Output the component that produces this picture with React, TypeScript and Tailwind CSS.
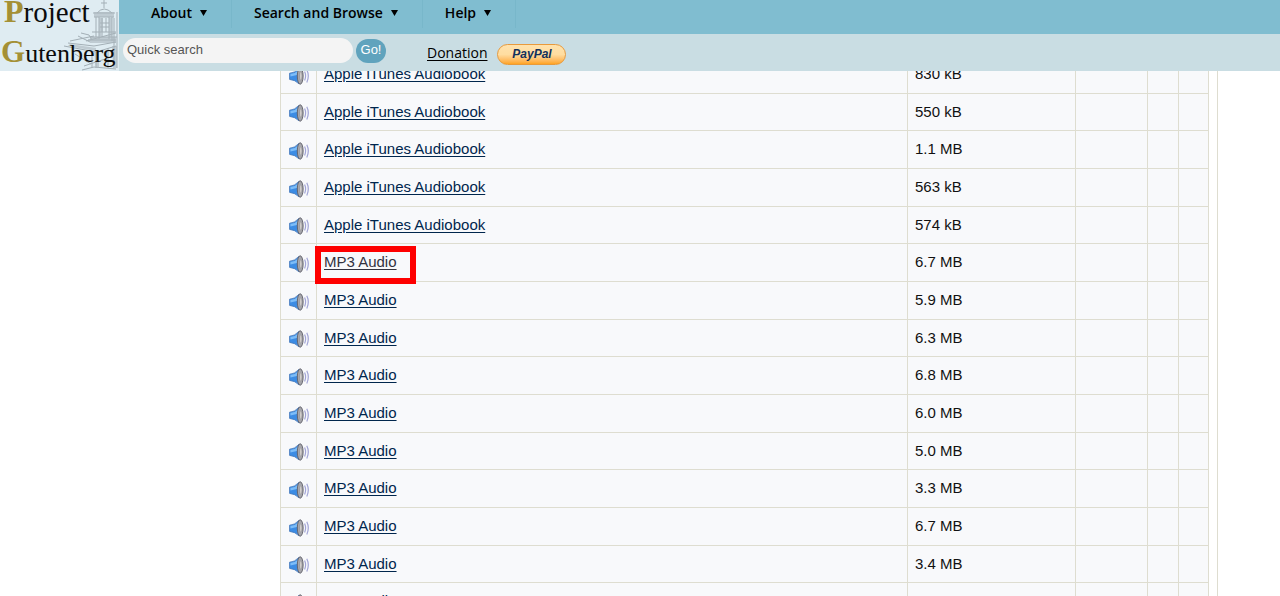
import React from 'react';

const files = [
  { format: 'Apple iTunes Audiobook', size: '830 kB' },
  { format: 'Apple iTunes Audiobook', size: '550 kB' },
  { format: 'Apple iTunes Audiobook', size: '1.1 MB' },
  { format: 'Apple iTunes Audiobook', size: '563 kB' },
  { format: 'Apple iTunes Audiobook', size: '574 kB' },
  { format: 'MP3 Audio', size: '6.7 MB', marked: true },
  { format: 'MP3 Audio', size: '5.9 MB' },
  { format: 'MP3 Audio', size: '6.3 MB' },
  { format: 'MP3 Audio', size: '6.8 MB' },
  { format: 'MP3 Audio', size: '6.0 MB' },
  { format: 'MP3 Audio', size: '5.0 MB' },
  { format: 'MP3 Audio', size: '3.3 MB' },
  { format: 'MP3 Audio', size: '6.7 MB' },
  { format: 'MP3 Audio', size: '3.4 MB' },
  { format: 'MP3 Audio', size: '3.5 MB' },
];

function Logo() {
  return (
    <a href="#" aria-label="Project Gutenberg" className="block shrink-0 bg-[#dfecf2]">
      <svg width="119" height="71" viewBox="0 0 119 71">
        {/* printing press */}
        <g fill="none" stroke="#a3afb6" strokeWidth="1">
          <path d="M104 0v8M101 3h6M97 13q7-8 15 0M93 13h22M94 17h20M96 17v20M99 17v22M109 17v22M112 17v24M102 18v14M106 18v14" />
          <path d="M92 32h24M90 37h27M100 23h9M100 27h9M117 12v56M114 18v48M81 33l8 2 3 5M86 41l30-8" />
          <path d="M68 43l26 3 22-4M64 46l32 6 20-6M70 41l24-5M78 36l12 6M88 40h28M92 54v14M96 52v16M108 48v20M84 66l24-8M75 54l16 10M82 70l12-3 22 2" />
        </g>
        <g fill="#aab6bd" opacity="0.6">
          <path d="M94 12h20v5H94zM99 18h4v18h-4zM109 18h3v22h-3zM90 37h26v6H90zM70 44l26 4v3l-28-5zM94 50h5v18h-3zM112 46h5v22h-4z" />
        </g>
        <g fontFamily="'Liberation Serif', serif" fill="#0b0b0b">
          <text x="4" y="22" fontSize="29">
            <tspan fill="#a49035" fontSize="32" fontWeight="bold">P</tspan>roject
          </text>
          <text x="1" y="62" fontSize="26">
            <tspan fill="#a49035" fontSize="31" fontWeight="bold">G</tspan>utenberg
          </text>
        </g>
      </svg>
    </a>
  );
}

function SpeakerIcon() {
  return (
    <svg width="20" height="18" viewBox="0 0 20 18" className="mx-auto block" aria-hidden="true">
      <path d="M0.6 6.2Q5.5 6.2 10 1.4v15.4Q6 12.8 0.6 12.4z" fill="#3c8ce4" stroke="#3c72b8" strokeWidth="0.8" />
      <path d="M1.4 7Q5.6 7 9 3.8v4L1.4 9.6z" fill="#7dbdf8" />
      <ellipse cx="11.2" cy="9" rx="2.9" ry="8.2" fill="#a6a6ac" stroke="#66666f" strokeWidth="1" />
      <ellipse cx="11.8" cy="9" rx="1.2" ry="4.2" fill="#dad6d2" stroke="#83838c" strokeWidth="0.6" />
      <path d="M15.6 4.6q2 4.4 0 9M17.8 2.8q3 6 0 12.6" fill="none" stroke="#a2a5d6" strokeWidth="1.2" />
    </svg>
  );
}

function MenuItem({ label }: { label: string }) {
  return (
    <li className="border-r border-[#78b7ca]">
      <button className="flex h-7 items-center gap-2 pr-6 pb-[3px] pl-[22px] font-semibold">
        {label}
        <svg width="7" height="6" viewBox="0 0 7 6" aria-hidden="true">
          <path d="M0 0h7L3.5 6z" fill="#000" />
        </svg>
      </button>
    </li>
  );
}

function Header() {
  return (
    <header className="fixed inset-x-0 top-0 z-10 flex bg-[#c9dde3] font-['Open_Sans',sans-serif] text-sm text-black">
      <Logo />
      <div className="flex-1">
        <nav className="h-[34px] bg-[#80bdd0] pl-[10px]">
          <ul className="flex">
            <MenuItem label="About" />
            <MenuItem label="Search and Browse" />
            <MenuItem label="Help" />
          </ul>
        </nav>
        <div className="flex h-[37px] items-center pl-1">
          <form className="flex items-center gap-[3px] pb-1 font-['Liberation_Sans',sans-serif]">
            <input
              type="text"
              aria-label="Quick search"
              placeholder="Quick search"
              className="h-[25px] w-[230px] rounded-full bg-[#f4f4f4] px-1 pb-0.5 text-[13px] placeholder:text-[#555]"
            />
            <button type="button" className="h-6 w-[30px] rounded-full bg-[#60a3bd] text-[13px] text-white">
              Go!
            </button>
          </form>
          <a href="#" className="ml-[41px] underline underline-offset-2">Donation</a>
          <button className="ml-[10px] mt-1 h-[21px] w-[69px] rounded-full border border-[#e89a3c] bg-linear-to-b from-[#ffe2ad] via-[#ffdda0] to-[#ffa41c] pb-0.5 font-['Liberation_Sans',sans-serif] text-xs leading-none font-bold text-[#12305c] italic">
            PayPal
          </button>
        </div>
      </div>
    </header>
  );
}

export default function App() {
  return (
    <div className="h-screen overflow-hidden bg-white font-['Liberation_Sans',Arial,sans-serif] text-[15px] text-[#111]">
      <Header />
      <main className="ml-[280px] mr-[62px] border-r border-[#deddd0] pt-[55px] pr-2">
        <table className="w-full table-fixed border-collapse bg-[#f8f9fb]">
          <colgroup>
            <col className="w-9" />
            <col />
            <col className="w-[168px]" />
            <col className="w-[72px]" />
            <col className="w-[31px]" />
            <col className="w-[30px]" />
          </colgroup>
          <tbody>
            {files.map((file, i) => (
              <tr key={i} className="h-[38px] nth-[3n+2]:h-[37px] *:border *:border-[#deddd0]">
                <td className="pt-0.5">
                  <SpeakerIcon />
                </td>
                <td className="px-[7px]">
                  <span className="relative">
                    <a href="#" className={file.marked ? 'text-[#33333f] underline underline-offset-2' : 'text-[#00264d] underline underline-offset-2'}>
                      {file.format}
                    </a>
                    {file.marked && (
                      <span className="pointer-events-none absolute -inset-x-[9px] -top-[7px] h-[38px] w-[101px] border-6 border-[#fe0000]" />
                    )}
                  </span>
                </td>
                <td className="px-[7px]">{file.size}</td>
                <td />
                <td />
                <td />
              </tr>
            ))}
          </tbody>
        </table>
      </main>
    </div>
  );
}
